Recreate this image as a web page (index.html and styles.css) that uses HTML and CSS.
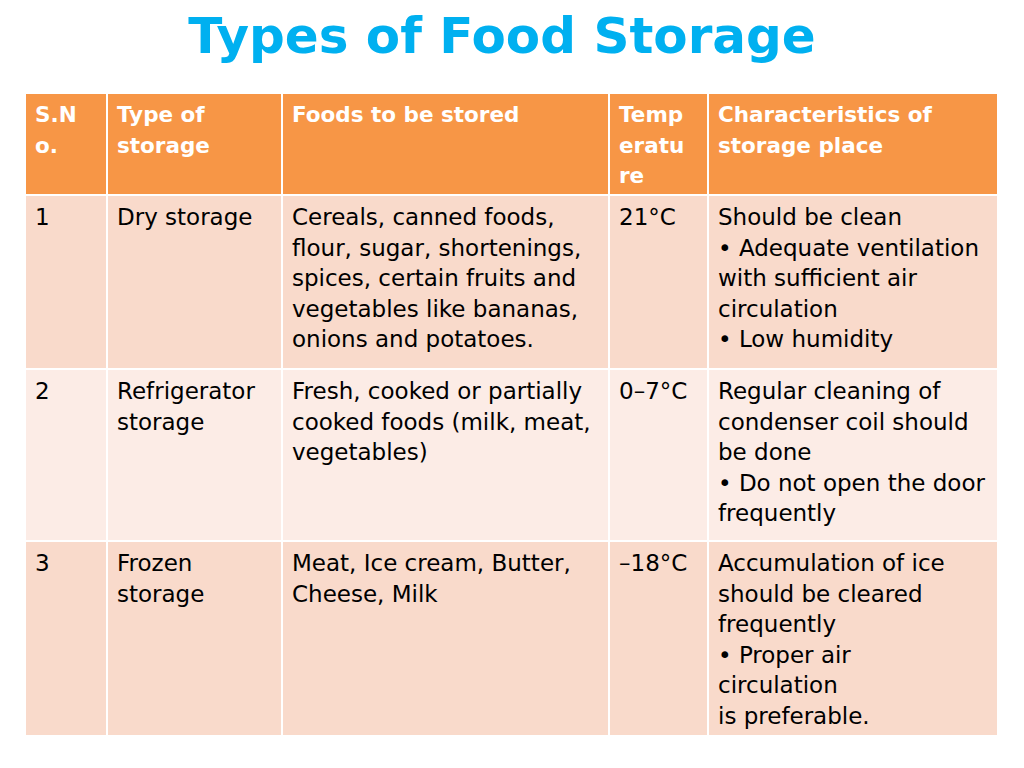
FILE: index.html
```html
<!DOCTYPE html>
<html>
<head>
<meta charset="utf-8">
<link rel="stylesheet" href="styles.css">
</head>
<body>
<h1 class="title">Types of Food Storage</h1>
<div class="table">
  <div class="cell head">S.N<br>o.</div>
  <div class="cell head">Type of<br>storage</div>
  <div class="cell head">Foods to be stored</div>
  <div class="cell head">Temp<br>eratu<br>re</div>
  <div class="cell head">Characteristics of<br>storage place</div>

  <div class="cell odd">1</div>
  <div class="cell odd">Dry storage</div>
  <div class="cell odd">Cereals, canned foods,<br>flour, sugar, shortenings,<br>spices, certain fruits and<br>vegetables like bananas,<br>onions and potatoes.</div>
  <div class="cell odd">21°C</div>
  <div class="cell odd">Should be clean<br>• Adequate ventilation<br>with sufficient air<br>circulation<br>• Low humidity</div>

  <div class="cell even">2</div>
  <div class="cell even">Refrigerator<br>storage</div>
  <div class="cell even">Fresh, cooked or partially<br>cooked foods (milk, meat,<br>vegetables)</div>
  <div class="cell even">0–7°C</div>
  <div class="cell even">Regular cleaning of<br>condenser coil should<br>be done<br>• Do not open the door<br>frequently</div>

  <div class="cell odd">3</div>
  <div class="cell odd">Frozen<br>storage</div>
  <div class="cell odd">Meat, Ice cream, Butter,<br>Cheese, Milk</div>
  <div class="cell odd">–18°C</div>
  <div class="cell odd">Accumulation of ice<br>should be cleared<br>frequently<br>• Proper air<br>circulation<br>is preferable.</div>
</div>
</body>
</html>
```
FILE: styles.css
```css
html, body {
  margin: 0;
  padding: 0;
  background: #ffffff;
}
body {
  font-family: "DejaVu Sans", "Liberation Sans", sans-serif;
  width: 1024px;
  height: 768px;
  overflow: hidden;
}
.title {
  margin: 0;
  padding-top: 3px;
  padding-right: 20px;
  height: 90px;
  box-sizing: border-box;
  text-align: center;
  font-size: 50px;
  font-weight: bold;
  color: #00b0f0;
  line-height: 66px;
}
.table {
  margin-left: 26px;
  margin-top: 4px;
  width: 971px;
  display: grid;
  grid-template-columns: 80px 173px 325px 97px 288px;
  grid-template-rows: 100px 172px 170px 193px;
  gap: 2px;
  background: #ffffff;
}
.cell {
  box-sizing: border-box;
  padding: 6px 4px 0 9px;
  font-size: 23px;
  line-height: 30.5px;
  color: #000000;
  white-space: nowrap;
  overflow: hidden;
}
.head {
  background: #f79646;
  color: #ffffff;
  font-weight: bold;
  font-size: 21.5px;
}
.odd {
  background: #f9dacb;
}
.even {
  background: #fcece6;
}
```
